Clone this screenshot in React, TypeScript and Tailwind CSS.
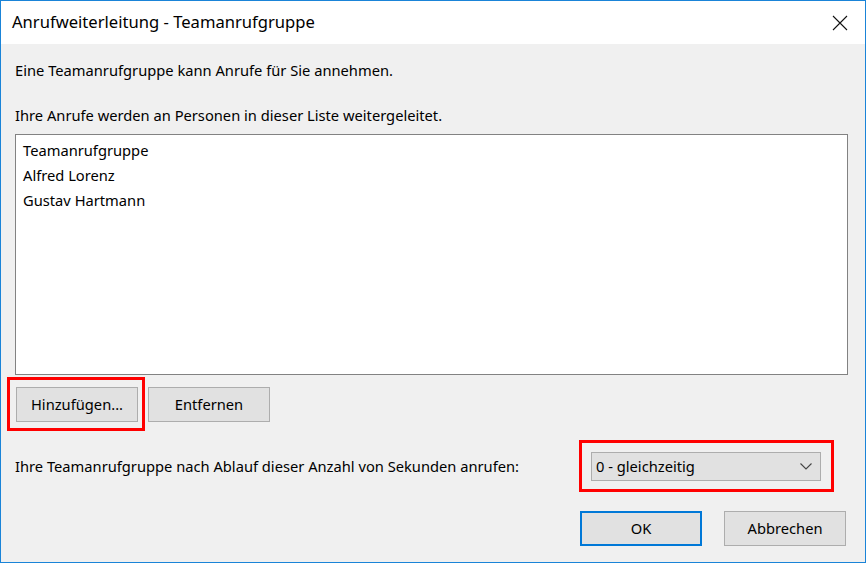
import React from "react";

const FONT = { fontFamily: '"Noto Sans", "Open Sans", sans-serif' };

const ITEMS = ["Teamanrufgruppe", "Alfred Lorenz", "Gustav Hartmann"];

function WinButton({ children, primary }: { children: React.ReactNode; primary?: boolean }) {
  return (
    <button
      className={
        "w-[122px] h-[35px] bg-[#e1e1e1] text-[14.7px] text-black flex items-center justify-center " +
        (primary ? "border-2 border-[#0078d7]" : "border border-[#adadad]")
      }
    >
      {children}
    </button>
  );
}

export default function App() {
  return (
    <div className="w-[866px] h-[563px] border border-[#1a84d8] flex flex-col bg-[#f0f0f0] text-black" style={FONT}>
      {/* Title bar */}
      <div className="h-[43px] bg-white flex items-center justify-between pl-[11px] pr-[17px] flex-shrink-0">
        <span className="text-[16.6px] leading-none">Anrufweiterleitung - Teamanrufgruppe</span>
        <svg width="16" height="16" viewBox="0 0 16 16" className="mt-[1px]">
          <path d="M1 1L15 15M15 1L1 15" stroke="#111" strokeWidth="1.1" fill="none" />
        </svg>
      </div>

      {/* Body */}
      <div className="flex-1 flex flex-col pl-[14px] pr-[17px]">
        <p className="text-[14.7px] leading-[20px] mt-[16px]">Eine Teamanrufgruppe kann Anrufe für Sie annehmen.</p>
        <p className="text-[14.7px] leading-[20px] mt-[25px]">Ihre Anrufe werden an Personen in dieser Liste weitergeleitet.</p>

        <div className="mt-[9px] h-[241px] bg-white border border-[#828282] pt-[3px] pl-[7px]">
          {ITEMS.map(it => (
            <div key={it} className="text-[14.7px] h-[25px] leading-[25px]">{it}</div>
          ))}
        </div>

        <div className="flex gap-[10px] mt-[12px] pl-[1px]">
          <div className="relative">
            <WinButton>Hinzufügen...</WinButton>
            <span className="absolute -left-[9px] -right-[7px] -top-[10px] -bottom-[9px] border-[3px] border-[#ff0000] pointer-events-none" />
          </div>
          <WinButton>Entfernen</WinButton>
        </div>

        <div className="flex items-center justify-between mt-[30px]">
          <span className="text-[14.7px]">Ihre Teamanrufgruppe nach Ablauf dieser Anzahl von Sekunden anrufen:</span>
          <div className="relative mr-[27px]">
            <div className="w-[230px] h-[29px] bg-[#e1e1e1] border border-[#adadad] flex items-center justify-between pl-[4px] pr-[8px]">
              <span className="text-[14.7px]">0 - gleichzeitig</span>
              <svg width="12" height="7" viewBox="0 0 12 7">
                <path d="M0.5 0.5L6 6L11.5 0.5" stroke="#444" strokeWidth="1.1" fill="none" />
              </svg>
            </div>
            <span className="absolute -left-[12px] -right-[13px] -top-[12px] -bottom-[11px] border-[3px] border-[#ff0000] pointer-events-none" />
          </div>
        </div>

        <div className="flex justify-end gap-[22px] mt-[30px] pr-[2px]">
          <WinButton primary>OK</WinButton>
          <WinButton>Abbrechen</WinButton>
        </div>
      </div>
    </div>
  );
}
